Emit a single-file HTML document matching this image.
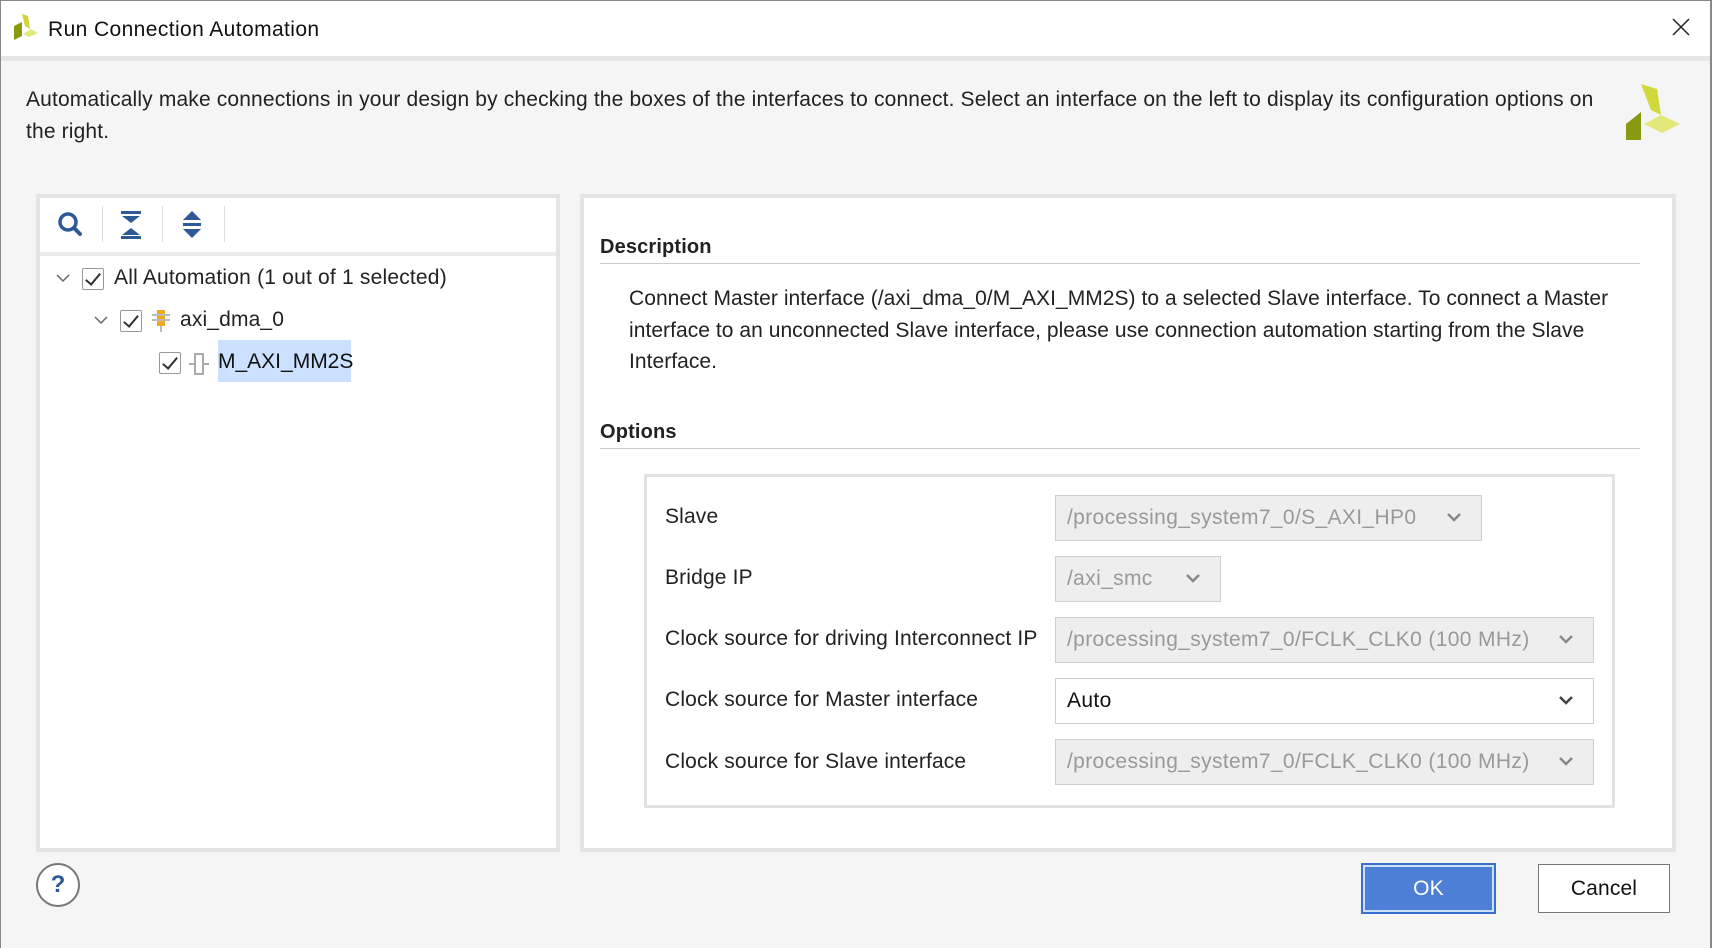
<!DOCTYPE html>
<html><head><style>
*{margin:0;padding:0;box-sizing:border-box}
body{width:1712px;height:948px;background:#f5f5f5;font-family:"Liberation Sans",sans-serif;color:#222;position:relative;overflow:hidden}
.abs{position:absolute}
.t{font-size:21px;white-space:nowrap;letter-spacing:0.15px}
.combo{position:absolute;height:46px;border:1px solid #d0d0d0;background:#eeeeee;color:#999;font-size:21px;letter-spacing:0.35px;line-height:44px;padding-left:11px;white-space:nowrap}
.combo.en{background:#fff;color:#111;border-color:#cfcfcf}
.chev{position:absolute;right:18px;top:14px;width:18px;height:14px}
.lbl{position:absolute;left:665px;font-size:21px;color:#222;letter-spacing:0.15px;white-space:nowrap}
.cb{position:absolute;width:22px;height:22px;border:1px solid #999;background:#fff;border-radius:2px}
.cb:after{content:"";position:absolute;left:6px;top:1px;width:6px;height:13px;border:solid #333;border-width:0 2px 2px 0;transform:rotate(40deg)}
</style></head><body>
<div class="abs" style="left:0;top:0;width:1712px;height:56px;background:#fff;border-top:1px solid #888;border-left:1px solid #888;border-right:1px solid #888"></div>
<div class="abs" style="left:0;top:56px;width:1712px;height:5px;background:#e6e6e6"></div>
<svg class="abs" style="left:12px;top:12px" width="30" height="30" viewBox="0 0 30 30"><polygon points="10,2 16,4 18,17 13,14" fill="#cfd635"/><polygon points="2,14 10,10 10,24 2,28" fill="#8a9a10"/><polygon points="11,22 19,17 26,21 17,25" fill="#e2e87a"/></svg>
<div class="abs t" style="left:48px;top:18px;font-size:21px;color:#111;letter-spacing:0.4px">Run Connection Automation</div>
<svg class="abs" style="left:1672px;top:18px" width="18" height="18"><path d="M1 1L17 17M17 1L1 17" stroke="#222" stroke-width="1.5"/></svg>
<div class="abs" style="left:1710px;top:0;width:2px;height:948px;background:#888"></div>
<div class="abs" style="left:0;top:0;width:1px;height:948px;background:#888"></div>

<div class="abs t" style="left:26px;top:84px;line-height:32px;white-space:normal;width:1620px;color:#222">Automatically make connections in your design by checking the boxes of the interfaces to connect. Select an interface on the left to display its configuration options on<br>the right.</div>
<svg class="abs" style="left:1624px;top:84px" width="60" height="58" viewBox="0 0 60 58"><polygon points="17,0 33,5 37,31 27,26" fill="#d2d93a"/><polygon points="2,40 17,28 17,56 2,56" fill="#8a9a10"/><polygon points="20,40 37,31 56,40 38,49" fill="#e2e87a"/></svg>

<!-- left panel -->
<div class="abs" style="left:36px;top:194px;width:524px;height:658px;border:4px solid #e4e4e4;background:#fff"></div>
<div class="abs" style="left:40px;top:252px;width:516px;height:4px;background:#ececec"></div>
<svg class="abs" style="left:56px;top:210px" width="30" height="30" viewBox="0 0 30 30"><circle cx="12" cy="12" r="8" fill="none" stroke="#2d5a96" stroke-width="3.5"/><path d="M18 18L24 24" stroke="#2d5a96" stroke-width="4" stroke-linecap="round"/></svg>
<div class="abs" style="left:102px;top:206px;width:1px;height:36px;background:#ddd"></div>
<svg class="abs" style="left:118px;top:210px" width="28" height="30" viewBox="0 0 28 30"><rect x="3" y="1" width="20" height="3" fill="#2d5a96"/><polygon points="4,6 22,6 13,13" fill="#2d5a96"/><polygon points="4,25 22,25 13,18" fill="#2d5a96"/><rect x="3" y="26" width="20" height="3" fill="#2d5a96"/></svg>
<div class="abs" style="left:162px;top:206px;width:1px;height:36px;background:#ddd"></div>
<svg class="abs" style="left:180px;top:210px" width="26" height="30" viewBox="0 0 26 30"><polygon points="3,10 21,10 12,1" fill="#2d5a96"/><rect x="3" y="13" width="18" height="3" fill="#2d5a96"/><polygon points="3,19 21,19 12,28" fill="#2d5a96"/></svg>
<div class="abs" style="left:224px;top:206px;width:1px;height:36px;background:#ddd"></div>

<svg class="abs" style="left:56px;top:274px" width="14" height="10"><path d="M1 1L7 7L13 1" stroke="#666" stroke-width="1.5" fill="none"/></svg>
<div class="cb" style="left:82px;top:268px"></div>
<div class="abs t" style="left:114px;top:266px;letter-spacing:0.2px">All Automation (1 out of 1 selected)</div>
<svg class="abs" style="left:94px;top:316px" width="14" height="10"><path d="M1 1L7 7L13 1" stroke="#666" stroke-width="1.5" fill="none"/></svg>
<div class="cb" style="left:120px;top:310px"></div>
<svg class="abs" style="left:150px;top:308px" width="22" height="26"><rect x="7" y="2" width="8" height="16" fill="#f5a623"/><path d="M2 7H20M2 12H20M11 18V24" stroke="#bbb" stroke-width="2"/></svg>
<div class="abs t" style="left:180px;top:308px">axi_dma_0</div>
<div class="cb" style="left:159px;top:352px"></div>
<svg class="abs" style="left:188px;top:351px" width="22" height="26"><rect x="7" y="3" width="8" height="20" fill="none" stroke="#aaa" stroke-width="2"/><path d="M1 13H6M16 13H21" stroke="#aaa" stroke-width="2"/></svg>
<div class="abs" style="left:218px;top:340px;width:133px;height:42px;background:#cce0ff"></div>
<div class="abs t" style="left:218px;top:350px;color:#111;letter-spacing:0">M_AXI_MM2S</div>

<!-- right panel -->
<div class="abs" style="left:580px;top:194px;width:1096px;height:658px;border:4px solid #e4e4e4;background:#fff"></div>
<div class="abs t" style="left:600px;top:236px;font-weight:bold;color:#222;font-size:20px">Description</div>
<div class="abs" style="left:600px;top:263px;width:1040px;height:1px;background:#ccc"></div>
<div class="abs t" style="left:629px;top:283px;line-height:31.5px;white-space:normal;width:1030px;letter-spacing:0.05px">Connect Master interface (/axi_dma_0/M_AXI_MM2S) to a selected Slave interface. To connect a Master<br>interface to an unconnected Slave interface, please use connection automation starting from the Slave<br>Interface.</div>
<div class="abs t" style="left:600px;top:421px;font-weight:bold;color:#222;font-size:20px">Options</div>
<div class="abs" style="left:600px;top:448px;width:1040px;height:1px;background:#ccc"></div>
<div class="abs" style="left:644px;top:474px;width:971px;height:334px;border:3px solid #e2e2e2;background:#fff"></div>

<div class="lbl" style="top:505px">Slave</div>
<div class="combo" style="left:1055px;top:495px;width:427px">/processing_system7_0/S_AXI_HP0<svg class="chev" viewBox="0 0 18 14"><path d="M3 4L9 10L15 4" stroke="#888" stroke-width="2.5" fill="none"/></svg></div>
<div class="lbl" style="top:566px">Bridge IP</div>
<div class="combo" style="left:1055px;top:556px;width:166px">/axi_smc<svg class="chev" viewBox="0 0 18 14"><path d="M3 4L9 10L15 4" stroke="#888" stroke-width="2.5" fill="none"/></svg></div>
<div class="lbl" style="top:627px">Clock source for driving Interconnect IP</div>
<div class="combo" style="left:1055px;top:617px;width:539px">/processing_system7_0/FCLK_CLK0 (100 MHz)<svg class="chev" viewBox="0 0 18 14"><path d="M3 4L9 10L15 4" stroke="#888" stroke-width="2.5" fill="none"/></svg></div>
<div class="lbl" style="top:688px">Clock source for Master interface</div>
<div class="combo en" style="left:1055px;top:678px;width:539px">Auto<svg class="chev" viewBox="0 0 18 14"><path d="M3 4L9 10L15 4" stroke="#444" stroke-width="2.5" fill="none"/></svg></div>
<div class="lbl" style="top:750px">Clock source for Slave interface</div>
<div class="combo" style="left:1055px;top:739px;width:539px">/processing_system7_0/FCLK_CLK0 (100 MHz)<svg class="chev" viewBox="0 0 18 14"><path d="M3 4L9 10L15 4" stroke="#888" stroke-width="2.5" fill="none"/></svg></div>

<!-- footer -->
<div class="abs" style="left:36px;top:863px;width:44px;height:44px;border:2px solid #777;border-radius:50%;background:#fff;text-align:center;font-weight:bold;color:#2d5a96;font-size:24px;line-height:40px">?</div>
<div class="abs" style="left:1361px;top:863px;width:135px;height:51px;background:#4d7fd6;border:2px solid #3a6fd0;box-shadow:inset 0 0 0 2px #cfe0ff"></div>
<div class="abs t" style="left:1361px;top:877px;width:135px;text-align:center;color:#fff">OK</div>
<div class="abs" style="left:1538px;top:864px;width:132px;height:49px;background:#fff;border:1px solid #777"></div>
<div class="abs t" style="left:1538px;top:877px;width:132px;text-align:center;color:#111">Cancel</div>
</body></html>
